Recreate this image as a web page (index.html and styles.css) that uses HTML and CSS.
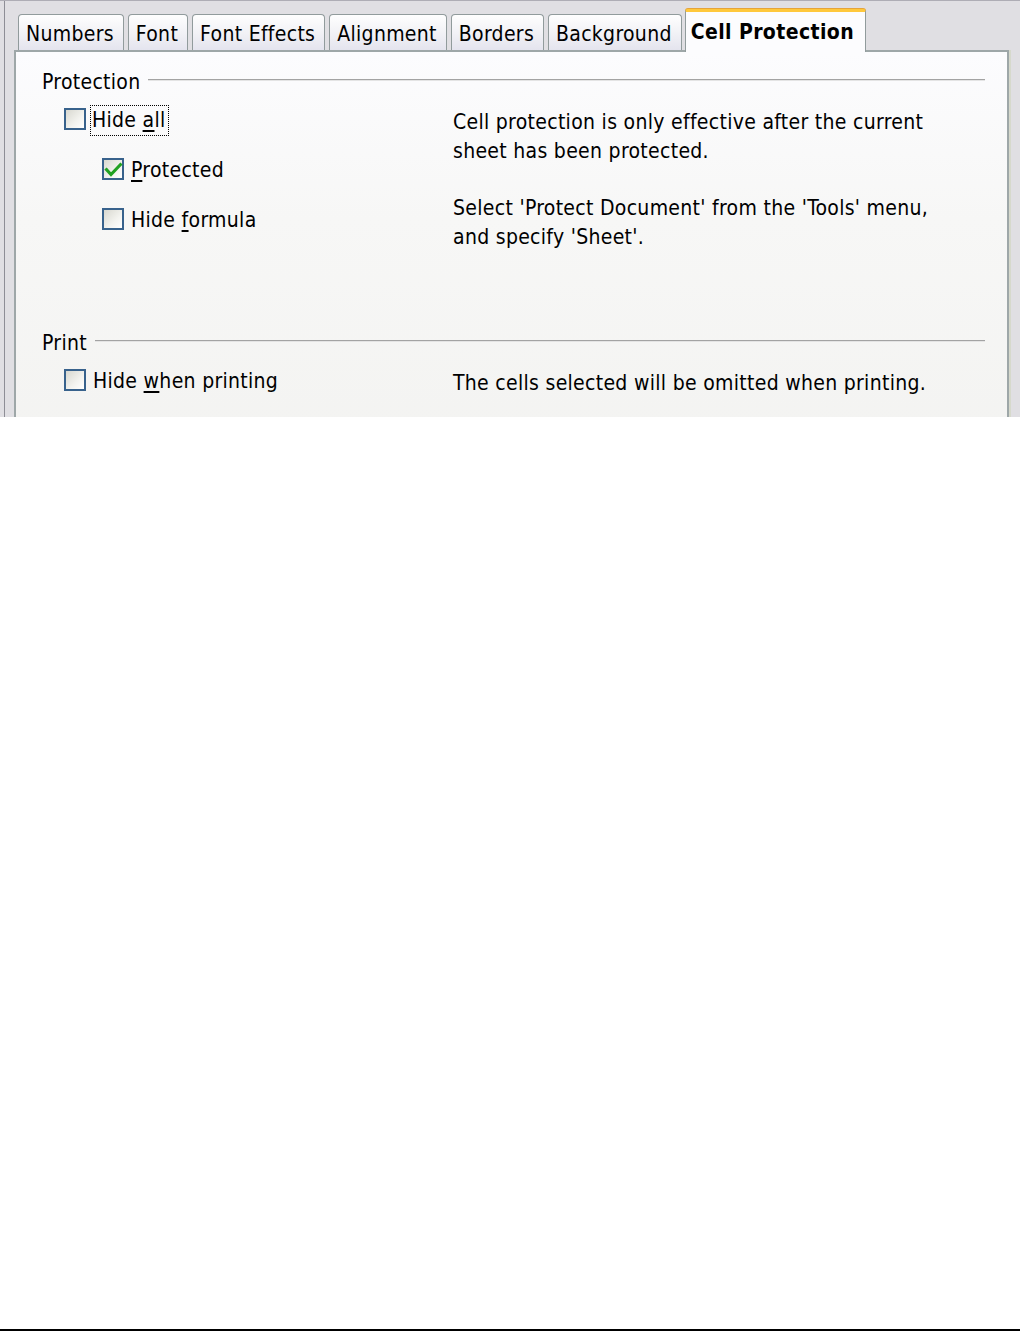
FILE: index.html
```html
<!DOCTYPE html>
<html lang="en">
<head>
    <meta charset="UTF-8">
    <meta name="viewport" content="width=device-width, initial-scale=1.0">
    <title>Format Cells - Cell Protection</title>
    <link rel="stylesheet" href="styles.css">
</head>
<body>
    <div class="window">
        <div class="frame">
            <ul class="tabs">
                <li class="tab">Numbers</li>
                <li class="tab">Font</li>
                <li class="tab">Font Effects</li>
                <li class="tab">Alignment</li>
                <li class="tab">Borders</li>
                <li class="tab">Background</li>
                <li class="tab active">Cell Protection</li>
            </ul>

            <div class="panel">
                <section class="group">
                    <div class="group-title">
                        <span>Protection</span>
                        <span class="rule"></span>
                    </div>
                    <div class="group-body">
                        <div class="options">
                            <label class="option">
                                <span class="check"></span>
                                <span class="focus">Hide <u>a</u>ll</span>
                            </label>
                            <label class="option sub">
                                <span class="check">
                                    <svg viewBox="0 0 22 22" width="22" height="22"><path d="M3.5 10.5 L9 16.5 L19.5 5.5" fill="none" stroke="#21a121" stroke-width="3.2"/></svg>
                                </span>
                                <span><u>P</u>rotected</span>
                            </label>
                            <label class="option sub">
                                <span class="check"></span>
                                <span>Hide <u>f</u>ormula</span>
                            </label>
                        </div>
                        <div class="notes">
                            <p>Cell protection is only effective after the current<br>sheet has been protected.</p>
                            <p>Select 'Protect Document' from the 'Tools' menu,<br>and specify 'Sheet'.</p>
                        </div>
                    </div>
                </section>

                <section class="group print">
                    <div class="group-title">
                        <span>Print</span>
                        <span class="rule"></span>
                    </div>
                    <div class="group-body">
                        <div class="options">
                            <label class="option">
                                <span class="check"></span>
                                <span>Hide <u>w</u>hen printing</span>
                            </label>
                        </div>
                        <div class="notes">
                            <p>The cells selected will be omitted when printing.</p>
                        </div>
                    </div>
                </section>
            </div>
        </div>
    </div>

    <div class="page-end"></div>
</body>
</html>
```

FILE: styles.css
```css
* {
    margin: 0;
    padding: 0;
    box-sizing: border-box;
}

body {
    min-height: 100vh;
    display: flex;
    flex-direction: column;
    background: #fff;
    color: #000;
    font-family: "DejaVu Sans Condensed", "DejaVu Sans", sans-serif;
    font-stretch: condensed;
    font-size: 21px;
    line-height: 29px;
    letter-spacing: 0.3px;
}

/* dialog crop */
.window {
    height: 417px;
    overflow: hidden;
    display: flex;
    padding-left: 4px;
    background: #e0dfe3;
    border-top: 1px solid #aeadb5;
}

.frame {
    flex: 1;
    display: flex;
    flex-direction: column;
    padding: 8px 0 0 9px;
    border-left: 1px solid #8e8e96;
}

/* tabs */
.tabs {
    display: flex;
    align-items: flex-end;
    gap: 4px;
    list-style: none;
    padding-left: 4px;
    margin-bottom: -2px;
    position: relative;
    z-index: 1;
}

.tab {
    height: 36px;
    margin-bottom: 2px;
    padding: 5px 9px 0 7px;
    white-space: nowrap;
    border: 1px solid #919b9c;
    border-bottom: none;
    border-radius: 4px 4px 0 0;
    background: linear-gradient(#fefefe, #f2f2f6 50%, #e4e4ee);
}

.tab.active {
    height: 43px;
    margin: 0 0 0 -1px;
    padding: 6px 11px 0 5px;
    font-weight: bold;
    letter-spacing: 0.4px;
    border-top: 3px solid #ffc83c;
    border-radius: 3px 3px 0 0;
    background: #fcfcfe;
    box-shadow: 0 -1px 0 #e6a43a;
}

/* page body */
.panel {
    flex: 1;
    min-height: 420px;
    margin-right: 11px;
    padding: 16px 22px 0 0;
    border: 2px solid #9ea7a8;
    background: linear-gradient(#fcfcfe, #f7f7f6 40%, #f3f3f1);
    box-shadow: 2px 0 0 #d6d9cc;
}

.group-title {
    display: flex;
    align-items: center;
    padding-left: 26px;
}

.rule {
    flex: 1;
    height: 2px;
    margin: 0 0 6px 8px;
    border-top: 1px solid #a3a3a3;
    border-bottom: 1px solid #e4e4e4;
}

.group-body {
    display: grid;
    grid-template-columns: 389px 1fr;
    margin-top: 9px;
    padding-left: 48px;
}

.options {
    display: flex;
    flex-direction: column;
    gap: 21px;
}

.option {
    display: flex;
    align-items: center;
    gap: 7px;
    white-space: nowrap;
}

.option.sub {
    padding-left: 38px;
}

.check {
    width: 22px;
    height: 22px;
    margin-bottom: 4px;
    flex-shrink: 0;
    border: 2px solid #38628c;
    background: linear-gradient(135deg, #d8d8d0, #f3f3ef 60%, #fff);
}

.check svg {
    display: block;
    margin: -2px;
}

.focus {
    margin-left: -2px;
    padding: 0 2px 0 1px;
    outline: 1px dotted #000;
    outline-offset: 0;
}

u {
    text-underline-offset: 3px;
}

.notes {
    padding-top: 2px;
    white-space: nowrap;
}

.notes p + p {
    margin-top: 28px;
}

.group.print {
    margin-top: 77px;
}

.group.print .group-body {
    margin-top: 9px;
}

.group.print .notes {
    padding-top: 2px;
}

.page-end {
    margin-top: auto;
    height: 2px;
    background: #000;
}
```
